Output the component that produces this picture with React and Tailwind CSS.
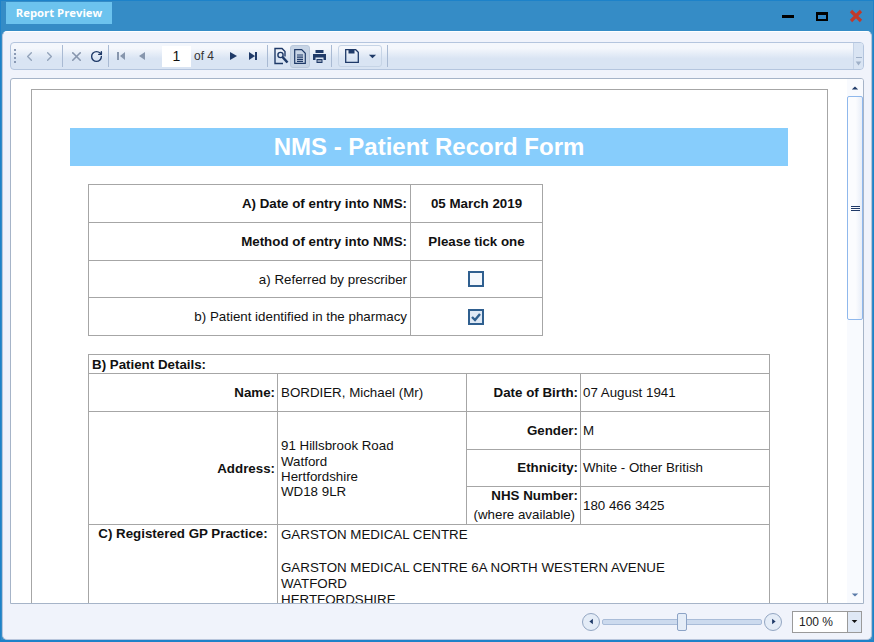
import React from "react";
import { ChevronLeft, ChevronRight, X, RotateCw } from "lucide-react";

const Sep = () => <div className="w-px h-[22px] bg-[#a9bad3] shrink-0" />;
const Cell = ({ w, children, className = "" }) => (
  <div className={`flex items-center justify-center shrink-0 ${className}`} style={{ width: w }}>{children}</div>
);
const Tri = ({ d, fill = "#1f3a68", size = 10 }) => (
  <svg width={size} height={size} viewBox="0 0 10 10"><path d={d} fill={fill} /></svg>
);

const Label = ({ children, bold = true, className = "pr-[2px]", rowSpan }) => (
  <td rowSpan={rowSpan} className={`border border-[#a6a6a6] text-right align-middle pl-[3px] ${bold ? "font-bold" : ""} ${className}`}>{children}</td>
);
const Val = ({ children, className = "pl-[3px]", rowSpan, colSpan }) => (
  <td rowSpan={rowSpan} colSpan={colSpan} className={`border border-[#a6a6a6] text-left align-middle pr-[3px] ${className}`}>{children}</td>
);
const Center = ({ children, className = "" }) => (
  <td className={`border border-[#a6a6a6] text-center align-middle ${className}`}>{children}</td>
);

export default function App() {
  return (
    <div className="w-[874px] h-[642px] overflow-hidden flex flex-col bg-[#358cc6] border-x border-t border-b-2 border-[#1d82c9] font-['Liberation_Sans',Arial,sans-serif] text-[13.33px] text-[#111]">
      {/* Title bar */}
      <div className="h-[30px] shrink-0 flex items-start pl-[5px]">
        <div className="mt-px w-[106px] h-[22px] bg-[#6cc3ee] text-white font-bold text-[11.3px] flex items-center justify-center font-['Open_Sans',sans-serif]">Report Preview</div>
        <div className="flex-1" />
        <div className="flex items-center h-[30px]">
          <Cell w={34}><div className="w-3 h-[3px] bg-black" /></Cell>
          <Cell w={34}><div className="w-3 h-[9px] border-2 border-t-[3px] border-black bg-[#2f86c6]" /></Cell>
          <Cell w={34}>
            <svg width="14" height="14" viewBox="0 0 14 14"><path d="M2 2 L12 12 M12 2 L2 12" stroke="#c0392b" strokeWidth="3.2" /></svg>
          </Cell>
        </div>
      </div>

      {/* Body */}
      <div className="flex-1 min-h-0 flex flex-col bg-[#f0f3fb] border border-[#b9c6dc] border-t-white rounded-[5px] mx-px px-[7px] pt-[10px]">
        {/* Toolbar */}
        <div className="h-[28px] shrink-0 flex rounded-[4px] border border-[#b4c5de] overflow-hidden bg-[linear-gradient(#f4f7fc,#f4f7fc_20%,#d9e4f3_60%,#d9e4f3)]">
          <div className="flex-1 flex items-center">
            <div className="w-[7px] flex flex-col gap-[2px] items-center shrink-0">
              <div className="w-[2px] h-[2px] bg-[#8a9ab5]" /><div className="w-[2px] h-[2px] bg-[#8a9ab5]" />
              <div className="w-[2px] h-[2px] bg-[#8a9ab5]" /><div className="w-[2px] h-[2px] bg-[#8a9ab5]" />
            </div>
            <Cell w={20} className="ml-px"><ChevronLeft size={15} color="#93a3ba" strokeWidth={2.2} /></Cell>
            <Cell w={20}><ChevronRight size={15} color="#93a3ba" strokeWidth={2.2} /></Cell>
            <Cell w={5} className="ml-[1px]"><Sep /></Cell>
            <Cell w={22}><X size={15} color="#8796ad" strokeWidth={2.6} /></Cell>
            <Cell w={18}><RotateCw size={13} color="#1f3a68" strokeWidth={2.6} /></Cell>
            <Cell w={6}><Sep /></Cell>
            <Cell w={20}><Tri fill="#8796ad" d="M1 1h2v8H1z M9 1v8L4 5z" /></Cell>
            <Cell w={22}><Tri fill="#8796ad" d="M8 1v8L2 5z" /></Cell>
            <div className="ml-[9px] w-[29px] h-[21px] bg-white text-center leading-[21px] text-[14px] shrink-0">1</div>
            <div className="w-[32px] pl-[3px] text-[12px] text-[#333] shrink-0">of 4</div>
            <Cell w={20}><Tri d="M2 1v8l7-4z" /></Cell>
            <Cell w={20}><Tri d="M1 1v8l6-4z M7 1h2v8H7z" /></Cell>
            <Cell w={6} className="ml-[1px]"><Sep /></Cell>
            <Cell w={20} className="ml-px">
              <svg width="16" height="18" viewBox="0 0 16 18" fill="none" stroke="#1f3a68" strokeWidth="1.4"><path d="M10 16.5H2V1.5h7l3 3v5" /><circle cx="7.5" cy="8" r="2.6" /><path d="M9.5 10l5 5.5" strokeWidth="2.6" /></svg>
            </Cell>
            <Cell w={20} className="ml-[-1px] h-[23px] bg-[#c8d5e6] rounded-[3px] border border-[#b9c8dc]">
              <svg width="12" height="15" viewBox="0 0 12 15" fill="none" stroke="#1f3a68" strokeWidth="1.2"><path d="M.7.7h7l3.6 3.6v10H.7z" /><path d="M3 6h6M3 8.2h6M3 10.4h6M3 12.4h6" /></svg>
            </Cell>
            <Cell w={20} className="ml-[-1px]">
              <svg width="15" height="15" viewBox="0 0 15 15"><path d="M3.5 1h8v3h-8z M1 5h13v6h-2.5V8.5h-8V11H1z M4.5 10h6v4h-6z" fill="#1f3a68" /><path d="M5.5 12h4" stroke="#fff" /></svg>
            </Cell>
            <Cell w={2} className="ml-px"><Sep /></Cell>
            <div className="ml-[6px] w-[44px] h-[22px] shrink-0 flex items-center rounded-[3px] border border-[#c6d4e6]">
              <Cell w={26}>
                <svg width="14" height="14" viewBox="0 0 14 14" fill="none"><path d="M.7.7h10l2.6 2.6v10H.7z" stroke="#1f3a68" strokeWidth="1.3" /><path d="M3.5 1h6v3.5h-6z" fill="#1f3a68" /></svg>
              </Cell>
              <Cell w={14}><Tri size={9} d="M1 3h8L5 7z" /></Cell>
            </div>
            <Cell w={10}><Sep /></Cell>
          </div>
          <div className="w-[10px] shrink-0 border-l border-[#c4d2e6] bg-[#d9e4f3] flex flex-col items-center justify-end pb-[2px]">
            <div className="w-[6px] h-px bg-[#9fb0c8] mb-[2px]" />
            <Tri size={7} fill="#9fb0c8" d="M1 2h8L5 8z" />
          </div>
        </div>

        {/* Report viewport */}
        <div className="mt-[8px] h-[526px] shrink-0 flex border border-[#a6b4c8] rounded-t-[3px] bg-white overflow-hidden">
          <div className="flex-1 min-w-0 overflow-hidden pl-[20px] pt-[10px]">
            <div className="w-[797px] h-[600px] border border-[#a6a6a6] bg-white pt-[38px] pl-[38px]">
              <div className="w-[718px] h-[38px] bg-[#87cdfc] text-white font-bold text-[24px] leading-[38px] text-center">NMS - Patient Record Form</div>

              <table className="ml-[18px] mt-[18px] border-collapse table-fixed w-[454px]">
                <colgroup><col className="w-[322px]" /><col className="w-[132px]" /></colgroup>
                <tbody>
                  <tr className="h-[38px]"><Label className="pr-[3px]">A) Date of entry into NMS:</Label><Center className="font-bold">05 March 2019</Center></tr>
                  <tr className="h-[38px]"><Label className="pr-[3px]">Method of entry into NMS:</Label><Center className="font-bold">Please tick one</Center></tr>
                  <tr className="h-[37px]"><Label bold={false} className="pr-[3px] pt-px">a) Referred by prescriber</Label>
                    <Center><div className="w-[16px] h-[16px] ml-[57px] border-2 border-[#2f5f8f] bg-[#f3f7fc]" /></Center></tr>
                  <tr className="h-[38px]"><Label bold={false} className="pr-[3px]">b) Patient identified in the pharmacy</Label>
                    <Center><div className="w-[16px] h-[16px] ml-[57px] border-2 border-[#2f5f8f] bg-[#dfe9f5] flex items-center justify-center">
                      <svg width="12" height="10" viewBox="0 0 12 10" fill="none"><path d="M2 5l3 3 5-6" stroke="#2f5f8f" strokeWidth="2.4" /></svg>
                    </div></Center></tr>
                </tbody>
              </table>

              <table className="ml-[18px] mt-[18px] border-collapse table-fixed w-[681px]">
                <colgroup><col className="w-[189px]" /><col className="w-[189px]" /><col className="w-[114px]" /><col className="w-[189px]" /></colgroup>
                <tbody>
                  <tr className="h-[19px]"><td colSpan={4} className="border border-[#a6a6a6] font-bold px-[3px] pt-px leading-[16px]">B) Patient Details:</td></tr>
                  <tr className="h-[38px]"><Label>Name:</Label><Val>BORDIER, Michael (Mr)</Val><Label>Date of Birth:</Label><Val className="pl-[2px]">07 August 1941</Val></tr>
                  <tr className="h-[38px]">
                    <Label rowSpan={3} className="pr-[2px] pt-[2px]">Address:</Label>
                    <Val rowSpan={3} className="pl-[3px] pt-[2px] leading-[15.3px]">91 Hillsbrook Road<br />Watford<br />Hertfordshire<br />WD18 9LR</Val>
                    <Label>Gender:</Label><Val className="pl-[2px]">M</Val>
                  </tr>
                  <tr className="h-[37px]"><Label>Ethnicity:</Label><Val className="pl-[2px]">White - Other British</Val></tr>
                  <tr className="h-[38px]"><td className="border border-[#a6a6a6] text-right pr-[2px] leading-[18.5px] align-middle"><b>NHS Number:</b><br /><span className="pr-[3px]">(where available)</span></td><Val className="pl-[2px]">180 466 3425</Val></tr>
                  <tr className="h-[120px]">
                    <td className="border border-[#a6a6a6] font-bold text-center align-top pt-[1px] leading-[15.5px]">C) Registered GP Practice:</td>
                    <Val colSpan={3} className="pl-[3px] align-top pt-[2px] leading-[16.3px]">GARSTON MEDICAL CENTRE<br /><br />GARSTON MEDICAL CENTRE 6A NORTH WESTERN AVENUE<br />WATFORD<br />HERTFORDSHIRE</Val>
                  </tr>
                </tbody>
              </table>
            </div>
          </div>

          {/* Scrollbar */}
          <div className="w-[16px] shrink-0 flex flex-col bg-[#f8fafe]">
            <div className="h-[17px] flex items-center justify-center shrink-0"><Tri size={8} d="M1 7h8L5 3z" /></div>
            <div className="h-[224px] shrink-0 border border-[#8fb8ec] rounded-[2px] bg-[linear-gradient(90deg,#fbfcfe,#fbfcfe_55%,#e8eef8)] flex flex-col items-center justify-center gap-px">
              <div className="w-[9px] h-px bg-[#1f3a68]" /><div className="w-[9px] h-px bg-[#1f3a68]" /><div className="w-[9px] h-px bg-[#1f3a68]" />
            </div>
            <div className="flex-1" />
            <div className="h-[17px] flex items-center justify-center shrink-0"><Tri size={8} fill="#5a7aa8" d="M1 3h8L5 7z" /></div>
          </div>
        </div>

        {/* Footer */}
        <div className="flex-1 flex items-center justify-end pr-[2px]">
          <div className="w-[18px] h-[18px] rounded-full border border-[#93a6c2] bg-[#e4ecf7] flex items-center justify-center"><Tri size={7} d="M7 1v8L2 5z" /></div>
          <div className="w-[160px] h-[6px] mx-[2px] rounded-[2px] border border-[#a9bcd8] bg-[#ccdaee] flex items-center relative">
            <div className="absolute left-[74px] top-[-7px] w-[10px] h-[18px] rounded-[2px] border border-[#8ca3c6] bg-[#e4ecf7]" />
          </div>
          <div className="w-[18px] h-[18px] rounded-full border border-[#93a6c2] bg-[#e4ecf7] flex items-center justify-center"><Tri size={7} d="M3 1v8L8 5z" /></div>
          <div className="ml-[10px] w-[70px] h-[22px] flex border border-[#9a9a9a] bg-white">
            <div className="flex-1 text-[12px] leading-[20px] pl-[6px] text-[#222]">100 %</div>
            <div className="w-[14px] border-l border-[#9a9a9a] bg-[#dfe8f5] flex items-center justify-center"><Tri size={7} fill="#111" d="M1 3h8L5 7z" /></div>
          </div>
        </div>
      </div>
    </div>
  );
}
